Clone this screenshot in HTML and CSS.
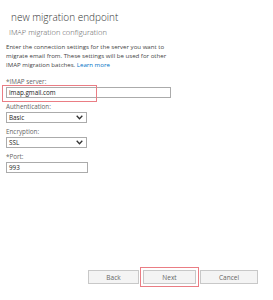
FILE: index.html
```html
<!DOCTYPE html>
<html lang="en">

<head>
    <meta charset="UTF-8">
    <meta name="viewport" content="width=device-width, initial-scale=1.0">
    <title>new migration endpoint</title>
    <link rel="stylesheet" href="styles.css">
</head>

<body>
    <div class="dialog">
        <div class="header">
            <h1 class="title">new migration endpoint</h1>
            <h2 class="subtitle">IMAP migration configuration</h2>
        </div>

        <p class="intro">
            Enter the connection settings for the server you want to<br>
            migrate email from. These settings will be used for other<br>
            IMAP migration batches. <a href="#">Learn more</a>
        </p>

        <div class="field">
            <label class="label">*IMAP server:</label>
            <div class="control-wrap">
                <div class="input wide">imap.gmail.com</div>
                <span class="mark"></span>
            </div>
        </div>

        <div class="field">
            <label class="label">Authentication:</label>
            <div class="select">
                <span>Basic</span>
                <svg width="7" height="5" viewBox="0 0 7 5"><path d="M0.7 0.8 L3.5 3.8 L6.3 0.8" fill="none" stroke="#333" stroke-width="1.3"/></svg>
            </div>
        </div>

        <div class="field">
            <label class="label">Encryption:</label>
            <div class="select">
                <span>SSL</span>
                <svg width="7" height="5" viewBox="0 0 7 5"><path d="M0.7 0.8 L3.5 3.8 L6.3 0.8" fill="none" stroke="#333" stroke-width="1.3"/></svg>
            </div>
        </div>

        <div class="field">
            <label class="label">*Port:</label>
            <div class="input narrow">993</div>
        </div>

        <div class="footer">
            <button class="btn back">Back</button>
            <button class="btn next">Next</button>
            <button class="btn cancel">Cancel</button>
        </div>
    </div>
</body>

</html>
```

FILE: styles.css
```css
body {
    margin: 0;
    background: #fff;
    font-family: "Open Sans", "Noto Sans", sans-serif;
}

.dialog {
    height: 300px;
    box-sizing: border-box;
    padding: 11px 15px 0 6px;
    display: flex;
    flex-direction: column;
}

.header {
    padding-left: 5px;
}

.title {
    margin: 0;
    font-size: 10px;
    line-height: 12px;
    font-weight: 300;
    color: #333;
}

.subtitle {
    margin: 4px 0 0 -2px;
    font-size: 7.5px;
    line-height: 10px;
    font-weight: 300;
    color: #555;
}

.intro {
    margin: 5px 0 8px;
    font-size: 6.1px;
    line-height: 9px;
    color: #444;
    white-space: nowrap;
}

.intro a {
    color: #0072c6;
    text-decoration: none;
}

.field {
    margin-bottom: 4px;
}

.label {
    display: block;
    font-size: 6.3px;
    line-height: 9px;
    color: #666;
}

.control-wrap {
    position: relative;
}

.input,
.select {
    margin-top: 1px;
    height: 11px;
    box-sizing: border-box;
    border: 1px solid #ababab;
    font-size: 6.3px;
    line-height: 9px;
    padding: 0 2px;
    color: #222;
    background: #fff;
}

.input.wide {
    width: 165px;
}

.input.narrow {
    width: 82px;
}

.select {
    width: 81px;
    display: flex;
    align-items: center;
    justify-content: space-between;
    padding-right: 3px;
}

/* red annotation box over the server field */
.mark {
    position: absolute;
    left: -4px;
    top: -2px;
    width: 95px;
    height: 17px;
    box-sizing: border-box;
    border: 1px solid #ea7d84;
}

.footer {
    margin-top: auto;
    margin-bottom: 16px;
    display: flex;
    justify-content: flex-end;
    gap: 4px;
}

.btn {
    height: 14px;
    box-sizing: border-box;
    border: 1px solid #c8c8c8;
    background: #f4f4f4;
    color: #666;
    font-family: inherit;
    font-size: 6.5px;
    padding: 0;
}

.back {
    width: 51px;
}

.next {
    width: 53px;
    outline: 1px solid #ea7d84;
    outline-offset: 2px;
}

.cancel {
    width: 58px;
}
```
